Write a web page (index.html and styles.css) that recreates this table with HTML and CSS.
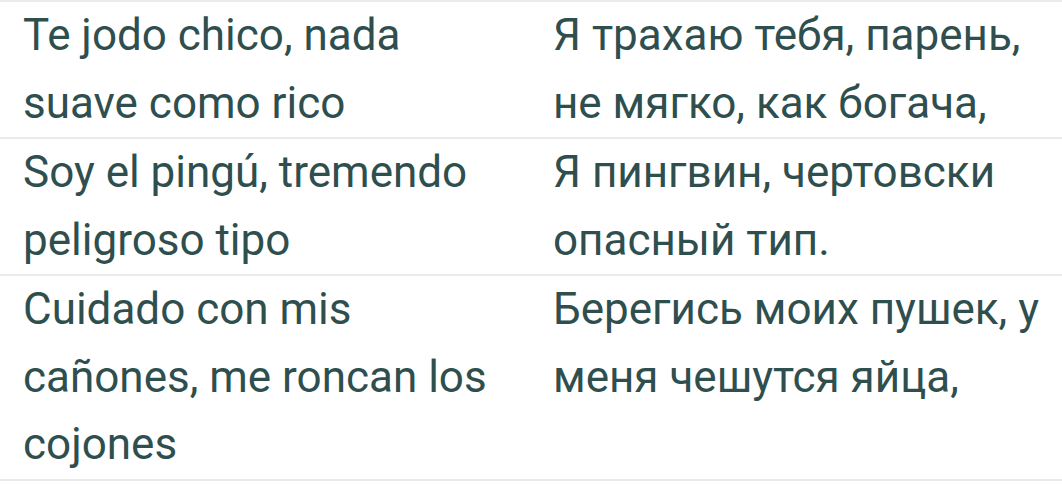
FILE: index.html
```html
<!DOCTYPE html>
<html lang="es">
<head>
<meta charset="utf-8">
<link rel="stylesheet" href="styles.css">
</head>
<body>
<div class="lyrics">
  <div class="row">
    <div class="cell orig">Te jodo chico, nada suave como rico</div>
    <div class="cell trans">Я трахаю тебя, парень, не мягко, как богача,</div>
  </div>
  <div class="row">
    <div class="cell orig">Soy el pingú, tremendo peligroso tipo</div>
    <div class="cell trans">Я пингвин, чертовски опасный тип.</div>
  </div>
  <div class="row">
    <div class="cell orig">Cuidado con mis cañones, me roncan los cojones</div>
    <div class="cell trans">Берегись моих пушек, у меня чешутся яйца,</div>
  </div>
</div>
</body>
</html>
```

FILE: styles.css
```css
html, body {
  margin: 0;
  padding: 0;
  background: #ffffff;
}

.lyrics {
  border-top: 2px solid #ebebeb;
  font-family: Roboto, "Liberation Sans", sans-serif;
  font-size: 44px;
  line-height: 67.5px;
  color: #2f4f4f;
}

.row {
  display: grid;
  grid-template-columns: 530px 1fr;
  border-bottom: 2px solid #ebebeb;
}

.cell {
  padding: 0 23px;
}

.cell.trans {
  padding: 0 0 0 23px;
}
```
